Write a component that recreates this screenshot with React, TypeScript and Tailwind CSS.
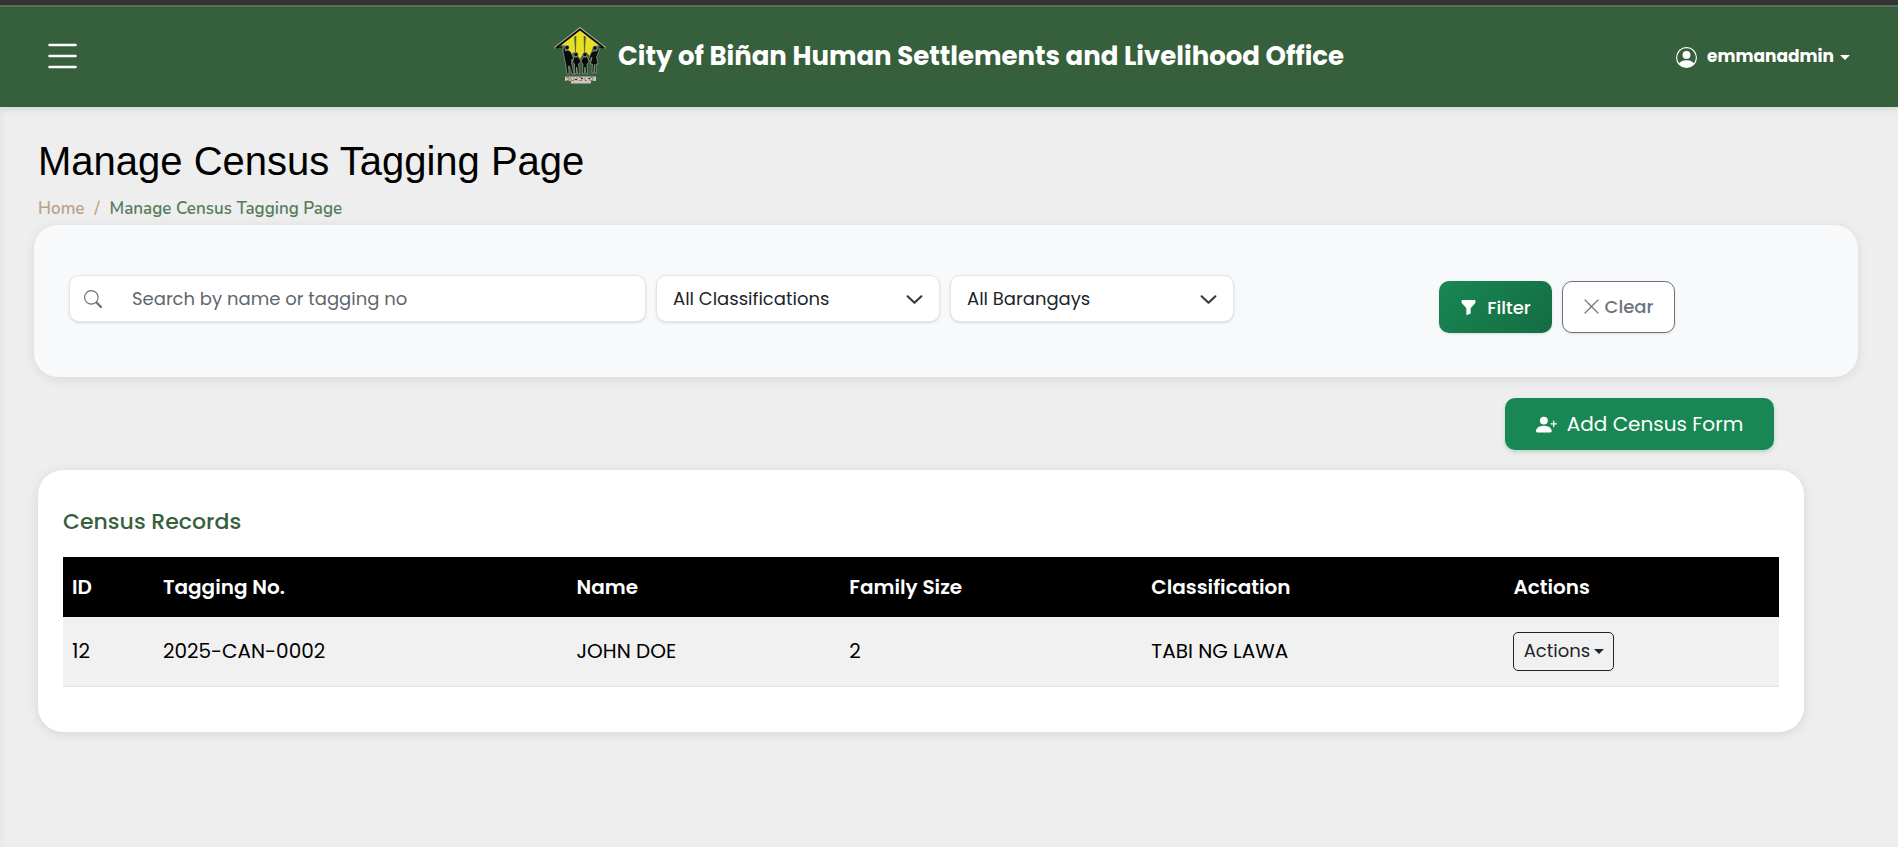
import { BsFunnelFill, BsPersonCircle, BsPersonPlusFill, BsSearch } from "react-icons/bs";

type CensusRecord = {
  id: number;
  taggingNo: string;
  name: string;
  familySize: number;
  classification: string;
};

const records: CensusRecord[] = [
  { id: 12, taggingNo: "2025-CAN-0002", name: "JOHN DOE", familySize: 2, classification: "TABI NG LAWA" },
];

function Caret() {
  return (
    <svg viewBox="0 0 10 5" className="h-[5px] w-2.5 fill-current" aria-hidden="true">
      <path d="M0 0h10L5 5z" />
    </svg>
  );
}

function Logo() {
  return (
    <svg viewBox="0 0 52 58" className="h-[58px] w-[52px] shrink-0" aria-hidden="true">
      <path d="M26 3 45 18 39 20 36 29 32 25 29 27 26 32 23 27 20 25 16 29 13 20 7 18Z" fill="#eadf22" />
      <path d="M22 9 20.500 10 21.500 25ZM30 9 31.500 10 30.500 25Z" fill="#365f3b" stroke="#365f3b" strokeWidth=".6" />
      <path d="M1 21 26 1.500 51 21" fill="none" stroke="#a9b3a2" strokeWidth="2.600" />
      <path d="M2 21 26 2.300 50 21" fill="none" stroke="#0b0b0b" strokeWidth="1.800" />
      <path d="M2 21 8 20M50 21 44 20" stroke="#0b0b0b" strokeWidth="1" />
      <g fill="#0a0a0a" stroke="#c3cabd" strokeWidth=".5">
        <path d="M9.500 18 9 24 10.500 32 12 39 13 47H15L14.500 39 15.500 39 18 47H20L17.500 36 18 32 19 34 20 33 17 25 14 23 11.500 24 10.700 18Z" />
        <path d="M20 30 18.500 35 20.500 37 20.500 47H22L22.500 40 24 47H25.500L24.500 37 27 34.500 24.500 30Z" />
        <path d="M29 30 27 34.500 29 37 28.500 47H30L31 40 32 47H33.500L33 37 35 35 33.500 30Z" />
        <path d="M43.500 18 43 24 40 24 37 25.500 34.500 33 35.500 34 38 30 36.500 37H38.500L38 46H39.500L40.500 37.500 41 46H42.500L42 37H44L42.500 30 45 24 44.500 18Z" />
        <circle cx="13" cy="20.500" r="2.200" />
        <circle cx="22" cy="27.500" r="2.200" />
        <circle cx="31" cy="27.500" r="2.200" />
        <circle cx="41" cy="21" r="2.200" />
      </g>
      <path d="M11 49.500H42V54H37V56.500H17V54H11Z" fill="#c6c9bb" />
      <path d="M12 50.500h3v3h-3m5-3v3h3v-3m3 0v3m2-3h3v3h-3m6-3v3h2m3-3h3v3h-3v-3" fill="none" stroke="#a8706c" strokeWidth="1" />
      <path d="M21 52.500h2m4-1h2m5 0h2" stroke="#3a3636" strokeWidth="1" />
    </svg>
  );
}

function FilterSelect({ label }: { label: string }) {
  return (
    <div className="relative min-w-0">
      <select
        aria-label={label}
        className="h-[47px] w-full appearance-none rounded-[10px] border border-[#e3e6e9] bg-white pr-12 pl-4 text-[18px] text-[#212529] shadow-sm"
      >
        <option>{label}</option>
      </select>
      <svg
        viewBox="0 0 16 16"
        className="pointer-events-none absolute top-4 right-[17px] size-[17px] fill-none stroke-[#343a40] stroke-2"
        aria-hidden="true"
      >
        <path d="m1.500 5 6.500 6 6.500-6" strokeLinecap="round" strokeLinejoin="round" />
      </svg>
    </div>
  );
}

export default function App() {
  return (
    <div className="flex min-h-screen flex-col bg-[#eeeeee] font-['Poppins','Inter',sans-serif] text-black">
      <header className="relative z-10 flex items-center justify-between border-t-5 border-[#333333] bg-[#365f3b] pr-12 pl-12 shadow-[0_2px_8px_rgba(0,0,0,0.1)]">
        <div className="absolute inset-x-0 top-0 h-0.5 bg-[#5b6b5c]" />
        <div className="flex flex-1 py-[38px]">
          <button type="button" aria-label="Toggle navigation" className="text-white">
            <svg viewBox="0 0 29 26" className="h-[26px] w-[29px]" fill="none" stroke="currentColor" strokeWidth="2.500" strokeLinecap="round">
              <path d="M1.500 2h26M1.500 13h26M1.500 24h26" />
            </svg>
          </button>
        </div>
        <div className="flex items-center gap-3">
          <Logo />
          <span className="text-[26px] font-bold whitespace-nowrap text-white">
            City of Biñan Human Settlements and Livelihood Office
          </span>
        </div>
        <div className="flex flex-1 justify-end pt-0.5">
          <button type="button" className="flex items-center text-[17px] font-bold text-white">
            <BsPersonCircle className="mr-2.5 size-[21px]" />
            <span className="mr-1.5">emmanadmin</span>
            <Caret />
          </button>
        </div>
      </header>

      <main className="flex-1 pr-10 pb-16 pl-[34px] shadow-[inset_3px_0_4px_rgba(0,0,0,0.03)]">
        <h1 className="pt-[30px] pl-1 font-['Liberation_Sans',Arial,sans-serif] text-[40px] leading-[48px]">
          Manage Census Tagging Page
        </h1>
        <nav aria-label="Breadcrumb" className="pt-3 pb-1 pl-1 font-['Nunito','Open_Sans',sans-serif] text-[17px] leading-6 font-semibold">
          <ol className="flex gap-2.5">
            <li><a href="#home" className="text-[#bda28c]">Home</a></li>
            <li aria-hidden="true" className="text-[#bda28c]">/</li>
            <li className="text-[#567d5b]">Manage Census Tagging Page</li>
          </ol>
        </nav>

        <form
          onSubmit={(e) => e.preventDefault()}
          className="grid grid-cols-[1165fr_592fr] rounded-[24px] bg-[#f8f9fb] pt-[50px] pr-8 pb-[44px] pl-[35px] shadow-[0_2px_12px_rgba(0,0,0,0.09)]"
        >
          <div className="grid grid-cols-[577fr_284fr_284fr] gap-2.5">
            <div className="flex h-[47px] min-w-0 items-center rounded-[10px] border border-[#e3e6e9] bg-white shadow-sm">
              <BsSearch className="mr-[30px] ml-3.5 size-[18px] shrink-0 text-[#6c757d]" />
              <input
                type="text"
                aria-label="Search by name or tagging no"
                placeholder="Search by name or tagging no"
                className="w-full min-w-0 bg-transparent pr-3 text-[18px] text-[#212529] outline-none placeholder:text-[#5f666d]"
              />
            </div>
            <FilterSelect label="All Classifications" />
            <FilterSelect label="All Barangays" />
          </div>
          <div className="flex min-w-0 justify-center gap-2.5 pt-1.5 pl-[54px]">
            <button
              type="submit"
              className="flex h-[52px] w-[113px] items-center justify-center gap-2.5 rounded-[10px] bg-linear-135 from-[#198754] to-[#146c43] text-[18px] font-medium text-white shadow-sm"
            >
              <BsFunnelFill className="size-[17px]" />
              Filter
            </button>
            <button
              type="reset"
              className="flex h-[52px] w-[113px] items-center justify-center gap-1.5 rounded-[10px] border border-[#6c757d] bg-white pb-0.5 text-[18px] font-medium text-[#6c757d] shadow-sm"
            >
              <svg viewBox="0 0 15 15" className="size-[15px]" fill="none" stroke="currentColor" strokeWidth="1.200" strokeLinecap="round" aria-hidden="true">
                <path d="m1 1 13 13M14 1 1 14" />
              </svg>
              Clear
            </button>
          </div>
        </form>

        <div className="mr-[54px] ml-1">
          <div className="flex justify-end pt-[21px] pr-[30px] pb-5">
            <button
              type="button"
              className="flex h-[52px] w-[269px] items-center justify-center gap-2.5 rounded-[10px] bg-[#198754] text-[20px] text-white shadow-[0_2px_4px_rgba(25,135,84,0.25)]"
            >
              <BsPersonPlusFill className="size-[21px]" />
              Add Census Form
            </button>
          </div>

          <section className="rounded-[25px] bg-white px-[25px] pt-9 pb-[45px] shadow-[0_2px_12px_rgba(0,0,0,0.1)]">
            <h2 className="pb-5 text-[22px] leading-[31px] font-medium text-[#365f3b]">Census Records</h2>
            <table className="w-full table-fixed border-collapse text-left text-[20px] leading-[30px]">
              <colgroup>
                <col className="w-[5.3%]" />
                <col className="w-[24.1%]" />
                <col className="w-[15.9%]" />
                <col className="w-[17.6%]" />
                <col className="w-[21.1%]" />
                <col className="w-[16%]" />
              </colgroup>
              <thead className="bg-black text-white">
                <tr className="h-[60px]">
                  {["ID", "Tagging No.", "Name", "Family Size", "Classification", "Actions"].map((h) => (
                    <th key={h} scope="col" className="px-[9px] font-semibold">{h}</th>
                  ))}
                </tr>
              </thead>
              <tbody>
                {records.map((r) => (
                  <tr key={r.id} className="h-[69px] border-b border-[#e3e5e7] bg-[#f1f1f1]">
                    <td className="px-[9px]">{r.id}</td>
                    <td className="px-[9px]">{r.taggingNo}</td>
                    <td className="px-[9px]">{r.name}</td>
                    <td className="px-[9px]">{r.familySize}</td>
                    <td className="px-[9px]">{r.classification}</td>
                    <td className="px-[9px]">
                      <button
                        type="button"
                        className="flex h-[39px] w-[101px] items-center justify-center gap-1 rounded-[5px] border border-[#212529] text-[18px] text-[#212529]"
                      >
                        Actions
                        <Caret />
                      </button>
                    </td>
                  </tr>
                ))}
              </tbody>
            </table>
          </section>
        </div>
      </main>
    </div>
  );
}
